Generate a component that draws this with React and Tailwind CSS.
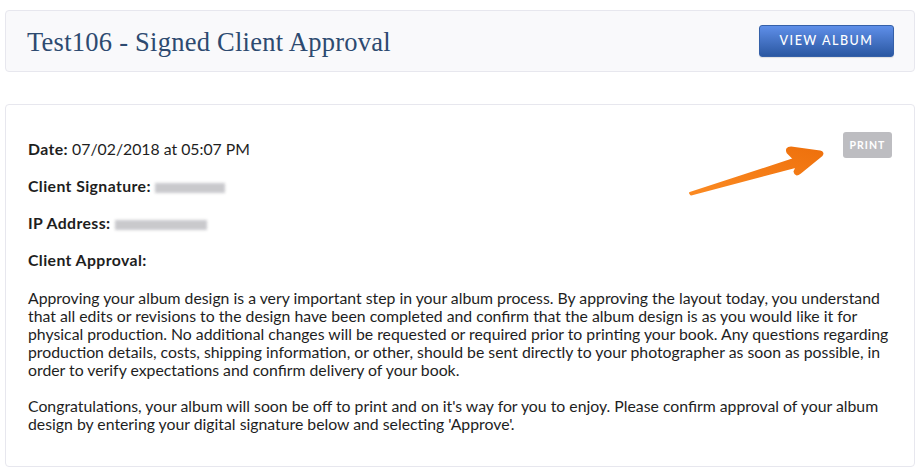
import React from "react";

function Blur({ w }) {
  return (
    <span
      className="inline-block align-middle h-[10px] bg-[#bcbcc0] blur-[1.5px] opacity-80"
      style={{ width: w }}
    />
  );
}

function Arrow() {
  return (
    <svg
      className="absolute left-[686px] top-[144px]"
      width="140"
      height="54"
      viewBox="686 144 140 54"
    >
      <defs>
        <linearGradient id="ag" x1="0" y1="1" x2="1" y2="0">
          <stop offset="0" stopColor="#fb8a22" />
          <stop offset="1" stopColor="#ee700c" />
        </linearGradient>
      </defs>
      <path
        d="M690 193 L794 159 L787.5 152.5 Q785.5 147.5 791 147.5 L820 151.5 Q824 152.5 821.5 155.5 L800 173 Q795.5 176.5 794.5 171.5 L797 166.5 L691 194.5 Z"
        fill="url(#ag)"
        stroke="url(#ag)"
        strokeWidth="2"
        strokeLinejoin="round"
      />
    </svg>
  );
}

export default function App() {
  return (
    <div className="relative bg-white w-[920px] h-[474px] pt-[10px] px-[5px] font-['Lato','Noto_Sans',sans-serif] text-[#1e1e1e]">
      <div className="h-[62px] bg-[#f9f9fb] border border-[#e7e7ee] rounded-[4px] flex items-center justify-between pl-[21px] pr-[20px]">
        <h1 className="font-['Liberation_Serif',serif] text-[26.5px] leading-none text-[#2d4a70] tracking-[0.25px] pt-[2px]">
          Test106 - Signed Client Approval
        </h1>
        <button className="w-[135px] h-[32px] rounded-[3px] bg-gradient-to-b from-[#5f8fe9] to-[#2b58a2] border border-[#3560a8] text-white text-[12.5px] font-medium tracking-[1.5px] shadow-[0_1px_1px_rgba(0,0,0,0.1)]">
          VIEW ALBUM
        </button>
      </div>

      <div className="mt-[32px] h-[363px] bg-white border border-[#e7e7ee] rounded-[4px] pt-[27px] pl-[22px] pr-[22px] text-[15.8px] leading-[18px]">
        <button className="float-right w-[49px] h-[26px] rounded-[3px] bg-[#bdbdc1] text-white text-[10.5px] font-bold tracking-[1px]">
          PRINT
        </button>
        <p className="pt-[8px]">
          <span className="font-bold tracking-[0.4px]">Date:</span> 07/02/2018 at 05:07 PM
        </p>
        <p className="mt-[19px]">
          <span className="font-bold tracking-[0.4px]">Client Signature:</span>{" "}
          <Blur w="70px" />
        </p>
        <p className="mt-[19px]">
          <span className="font-bold tracking-[0.4px]">IP Address:</span> <Blur w="92px" />
        </p>
        <p className="mt-[19px] font-bold tracking-[0.4px]">Client Approval:</p>
        <p className="mt-[20px]">
          Approving your album design is a very important step in your album
          process. By approving the layout today, you understand that all edits
          or revisions to the design have been completed and confirm that the
          album design is as you would like it for physical production. No
          additional changes will be requested or required prior to printing
          your book. Any questions regarding production details, costs,
          shipping information, or other, should be sent directly to your
          photographer as soon as possible, in order to verify expectations and
          confirm delivery of your book.
        </p>
        <p className="mt-[18px]">
          Congratulations, your album will soon be off to print and on it's way
          for you to enjoy. Please confirm approval of your album design by
          entering your digital signature below and selecting 'Approve'.
        </p>
      </div>
      <Arrow />
    </div>
  );
}
